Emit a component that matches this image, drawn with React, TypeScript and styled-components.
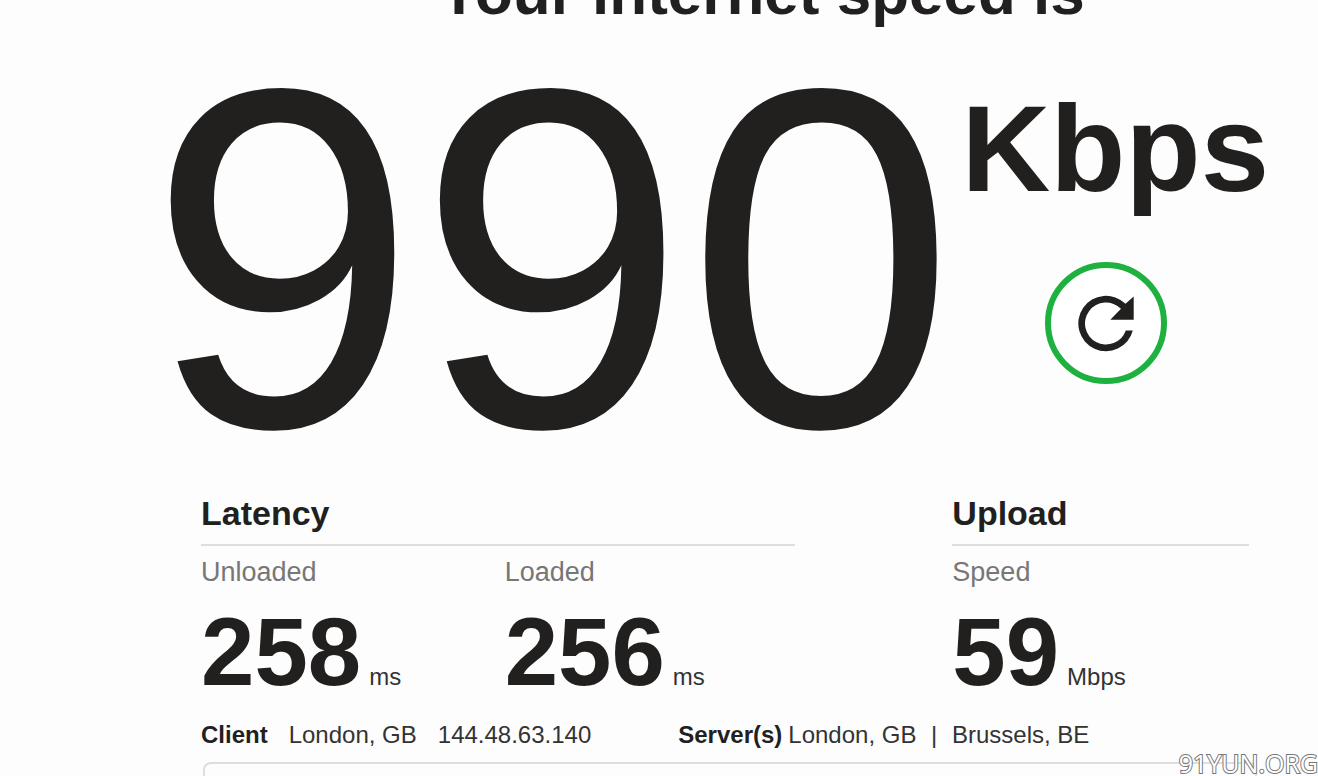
import React from "react";
import styled, { createGlobalStyle } from "styled-components";

const GlobalStyle = createGlobalStyle`
  * { box-sizing: border-box; }
  body {
    margin: 0;
    background: #fdfdfd;
    color: #221f1f;
    font-family: Arial, "Liberation Sans", sans-serif;
  }
`;

const Page = styled.main`
  display: flex;
  flex-direction: column;
  height: 100vh;
  overflow: hidden;
`;

const Title = styled.h1`
  margin: -42px 0 0 205px;
  font-size: 62px;
  line-height: 70px;
  text-align: center;
  white-space: nowrap;
  flex: none;
`;

const Hero = styled.section`
  display: flex;
  flex: none;
  height: 450px;
  padding-left: 148px;
`;

const SpeedValue = styled.div`
  margin-top: 6px;
  font-size: 484px;
  line-height: 450px;
`;

const SpeedSide = styled.div`
  display: flex;
  flex-direction: column;
  align-items: flex-start;
  padding: 51px 0 0 6px;
`;

const SpeedUnit = styled.strong`
  font-size: 123px;
  line-height: 140px;
`;

const RetryButton = styled.button`
  display: grid;
  place-items: center;
  width: 122px;
  height: 122px;
  margin: 43px 0 0 83px;
  padding: 0;
  border: 6px solid #1fb140;
  border-radius: 50%;
  background: #fff;
  color: #221f1f;
`;

const Details = styled.section`
  display: grid;
  flex: none;
  grid-template-columns: 595fr 297fr;
  column-gap: 157px;
  padding: 13px 69px 0 201px;
`;

const GroupTitle = styled.h2`
  margin: 0;
  padding-bottom: 9px;
  border-bottom: 2px solid #dedede;
  font-size: 34px;
  line-height: 44px;
`;

const Metrics = styled.div`
  display: grid;
  grid-template-columns: 304fr 291fr;
`;

const Label = styled.div`
  padding-top: 9px;
  color: #777;
  font-size: 27px;
  line-height: 34px;
`;

const Reading = styled.div`
  display: flex;
  align-items: baseline;
  gap: 8px;
  margin-top: 9px;
`;

const Value = styled.strong`
  font-size: 96px;
  line-height: 108px;
`;

const Unit = styled.span`
  color: #333;
  font-size: 24px;
`;

const Connection = styled.section`
  display: flex;
  flex: none;
  padding: 14px 69px 0 201px;
  color: #333;
  font-size: 24px;
  line-height: 30px;
  white-space: pre;

  strong { color: #221f1f; }
`;

const Client = styled.div`
  display: flex;
  gap: 21px;
  margin-right: 87px;
`;

const Servers = styled.div`
  display: flex;
  gap: 6px;
`;

const Divider = styled.span`
  margin: 0 8px;
`;

const Panel = styled.section`
  flex: 1;
  margin: 12px 61px 0 203px;
  border: 2px solid #dedede;
  border-bottom: 0;
  border-radius: 8px 8px 0 0;
`;

const Watermark = styled.div`
  position: absolute;
  right: 0;
  bottom: 0;
  color: #fff;
  font-family: "Open Sans", sans-serif;
  font-size: 25px;
  line-height: 26px;
  -webkit-text-stroke: 2px #777;
  paint-order: stroke fill;
`;

type MetricProps = { label: string; value: number; unit: string };

function Metric({ label, value, unit }: MetricProps) {
  return (
    <div>
      <Label>{label}</Label>
      <Reading>
        <Value>{value}</Value>
        <Unit>{unit}</Unit>
      </Reading>
    </div>
  );
}

export default function App() {
  return (
    <>
      <GlobalStyle />
      <Page>
        <Title>Your internet speed is</Title>
        <Hero>
          <SpeedValue>990</SpeedValue>
          <SpeedSide>
            <SpeedUnit>Kbps</SpeedUnit>
            <RetryButton type="button" aria-label="Test again">
              <svg width="58" height="58" viewBox="-29 -29 58 58" fill="currentColor" aria-hidden="true">
                <path d="M26.8 7.5A27.7 27.7 0 1 1 19.5-19.2L27.7-26.5V-3.2H4.3L15-14.2A21 21 0 1 0 19.8 7.5Z" />
              </svg>
            </RetryButton>
          </SpeedSide>
        </Hero>
        <Details>
          <div>
            <GroupTitle>Latency</GroupTitle>
            <Metrics>
              <Metric label="Unloaded" value={258} unit="ms" />
              <Metric label="Loaded" value={256} unit="ms" />
            </Metrics>
          </div>
          <div>
            <GroupTitle>Upload</GroupTitle>
            <Metric label="Speed" value={59} unit="Mbps" />
          </div>
        </Details>
        <Connection>
          <Client>
            <strong>Client</strong>
            <span>London, GB</span>
            <span>144.48.63.140</span>
          </Client>
          <Servers>
            <strong>Server(s)</strong>
            <span>
              London, GB <Divider>|</Divider> Brussels, BE
            </span>
          </Servers>
        </Connection>
        <Panel />
      </Page>
      <Watermark>91YUN.ORG</Watermark>
    </>
  );
}
